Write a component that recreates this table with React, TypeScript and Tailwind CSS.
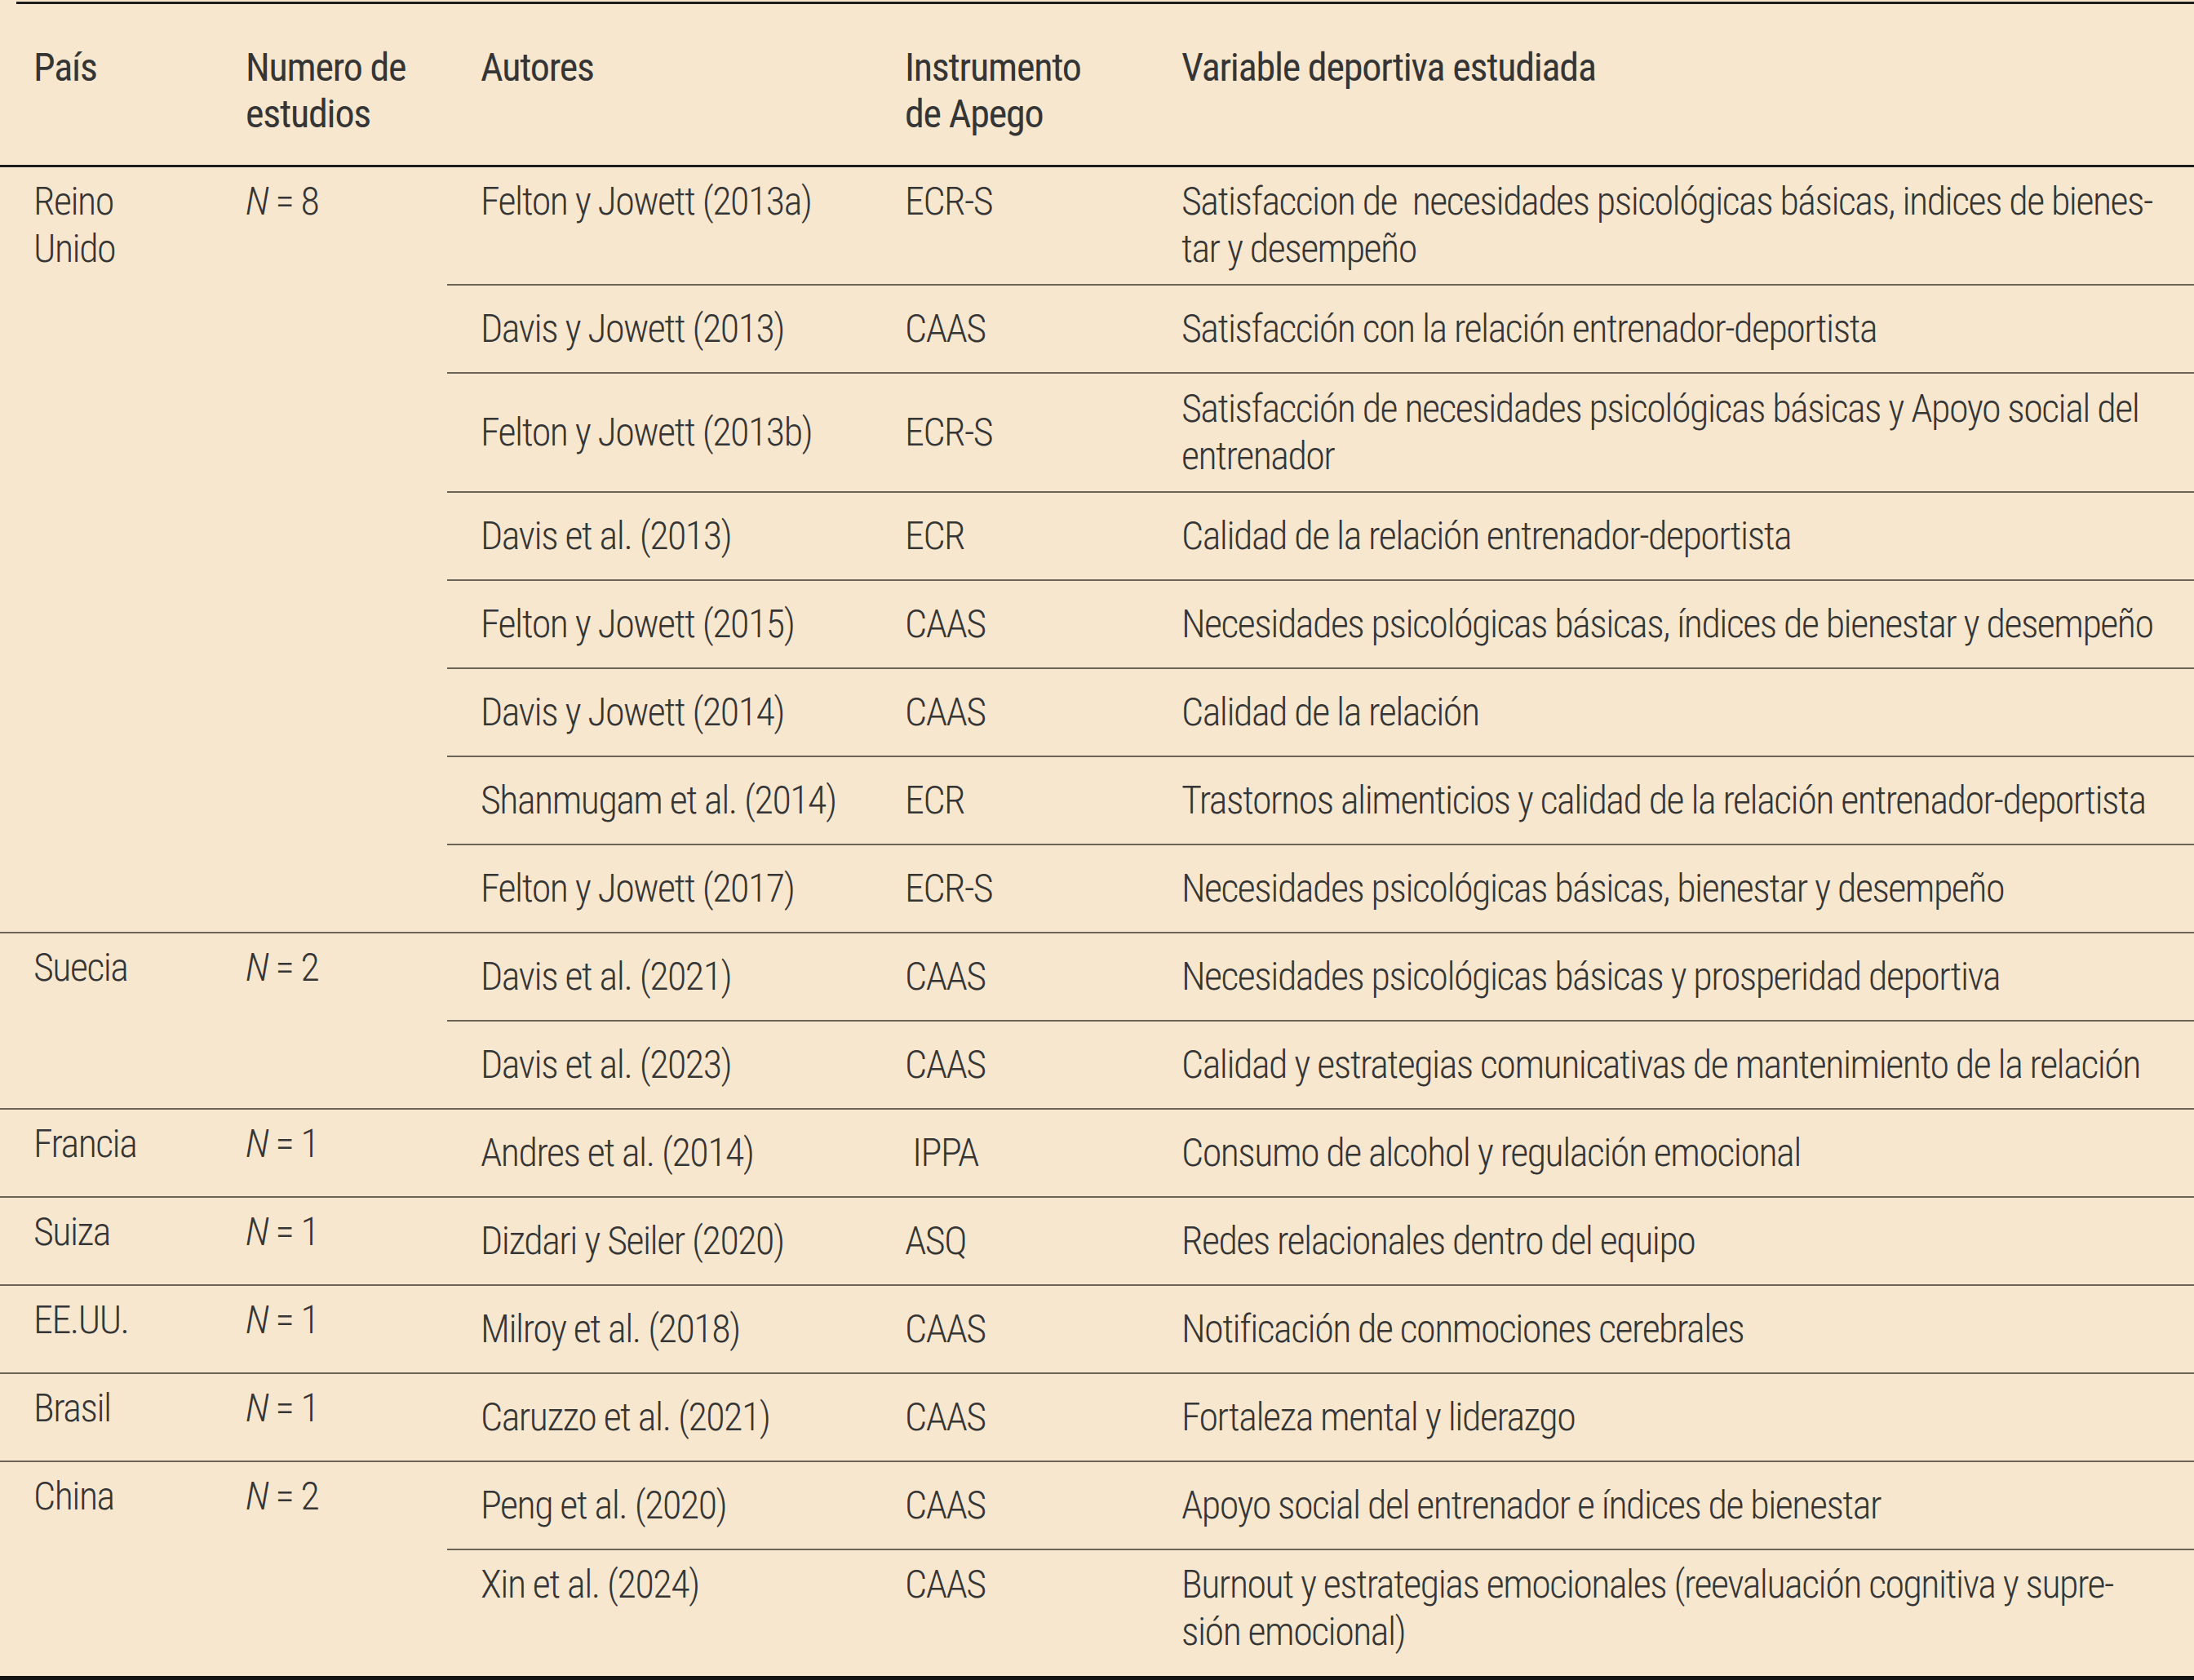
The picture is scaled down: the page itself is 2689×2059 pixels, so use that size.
type Row = {
    author: string;
    instr: string;
    lines: string[];
    h: string;
    top?: boolean;
};

type Group = {
    country: string[];
    n: string;
    rows: Row[];
};

const groups: Group[] = [
    {
        country: ["Reino", "Unido"],
        n: "8",
        rows: [
            { author: "Felton y Jowett (2013a)", instr: "ECR-S", lines: ["Satisfaccion de  necesidades psicológicas básicas, indices de bienes-", "tar y desempeño"], h: "h-[143px]", top: true },
            { author: "Davis y Jowett (2013)", instr: "CAAS", lines: ["Satisfacción con la relación entrenador-deportista"], h: "h-[108px]" },
            { author: "Felton y Jowett (2013b)", instr: "ECR-S", lines: ["Satisfacción de necesidades psicológicas básicas y Apoyo social del", "entrenador"], h: "h-[146px]" },
            { author: "Davis et al. (2013)", instr: "ECR", lines: ["Calidad de la relación entrenador-deportista"], h: "h-[108px]" },
            { author: "Felton y Jowett (2015)", instr: "CAAS", lines: ["Necesidades psicológicas básicas, índices de bienestar y desempeño"], h: "h-[108px]" },
            { author: "Davis y Jowett (2014)", instr: "CAAS", lines: ["Calidad de la relación"], h: "h-[108px]" },
            { author: "Shanmugam et al. (2014)", instr: "ECR", lines: ["Trastornos alimenticios y calidad de la relación entrenador-deportista"], h: "h-[108px]" },
            { author: "Felton y Jowett (2017)", instr: "ECR-S", lines: ["Necesidades psicológicas básicas, bienestar y desempeño"], h: "h-[108px]" },
        ],
    },
    {
        country: ["Suecia"],
        n: "2",
        rows: [
            { author: "Davis et al. (2021)", instr: "CAAS", lines: ["Necesidades psicológicas básicas y prosperidad deportiva"], h: "h-[108px]" },
            { author: "Davis et al. (2023)", instr: "CAAS", lines: ["Calidad y estrategias comunicativas de mantenimiento de la relación"], h: "h-[108px]" },
        ],
    },
    {
        country: ["Francia"],
        n: "1",
        rows: [{ author: "Andres et al. (2014)", instr: " IPPA", lines: ["Consumo de alcohol y regulación emocional"], h: "h-[108px]" }],
    },
    {
        country: ["Suiza"],
        n: "1",
        rows: [{ author: "Dizdari y Seiler (2020)", instr: "ASQ", lines: ["Redes relacionales dentro del equipo"], h: "h-[108px]" }],
    },
    {
        country: ["EE.UU."],
        n: "1",
        rows: [{ author: "Milroy et al. (2018)", instr: "CAAS", lines: ["Notificación de conmociones cerebrales"], h: "h-[108px]" }],
    },
    {
        country: ["Brasil"],
        n: "1",
        rows: [{ author: "Caruzzo et al. (2021)", instr: "CAAS", lines: ["Fortaleza mental y liderazgo"], h: "h-[108px]" }],
    },
    {
        country: ["China"],
        n: "2",
        rows: [
            { author: "Peng et al. (2020)", instr: "CAAS", lines: ["Apoyo social del entrenador e índices de bienestar"], h: "h-[108px]" },
            { author: "Xin et al. (2024)", instr: "CAAS", lines: ["Burnout y estrategias emocionales (reevaluación cognitiva y supre-", "sión emocional)"], h: "h-[156px]", top: true },
        ],
    },
];

const spans: Record<number, string> = {
    1: "row-span-1",
    2: "row-span-2",
    8: "row-span-8",
};

// body text: light, slightly tightened to get near the condensed face
const cell = "pl-[41px] text-[48px] leading-[58px] font-light tracking-[-1.5px]";

export default function App() {
    return (
        <div
            className="min-h-screen bg-[#f7e7ce] pt-[2px] text-[#353535] [font-family:'Roboto_Condensed',Roboto,sans-serif]"
        >
            {/* top rule */}
            <div className="ml-[20px] h-[3px] bg-[#1c1c1c]" />

            <div className="grid grid-cols-[260px_288px_520px_339px_1fr] border-b-[5px] border-[#141414]">

                {/* header */}
                {["País", "Numero de|estudios", "Autores", "Instrumento|de Apego", "Variable deportiva estudiada"].map((h, i) => (
                    <div
                        key={i}
                        className="h-[200px] border-b-[3px] border-[#1c1c1c] pl-[41px] pt-[49px] text-[48px] leading-[57px] font-normal tracking-[-1.2px]"
                    >
                        {h.split("|").map((l, j) => (
                            <div key={j} className="whitespace-nowrap">{l}</div>
                        ))}
                    </div>
                ))}

                {/* body */}
                {groups.map((g, gi) => (
                    g.rows.map((r, ri) => {
                        const border = gi === 0 && ri === 0 ? "" : "border-t-2 border-[#6b6456]";
                        const align = r.top ? "items-start pt-[13px]" : "items-center";
                        return [
                            ri === 0 && (
                                <div
                                    key={`c${gi}`}
                                    className={`${spans[g.rows.length]} ${border} ${cell} pt-[13px]`}
                                >
                                    {g.country.map((c, j) => (
                                        <div key={j}>{c}</div>
                                    ))}
                                </div>
                            ),
                            ri === 0 && (
                                <div
                                    key={`n${gi}`}
                                    className={`${spans[g.rows.length]} ${border} ${cell} pt-[13px] whitespace-nowrap`}
                                >
                                    <span className="italic">N</span> = {g.n}
                                </div>
                            ),
                            <div key={`a${gi}-${ri}`} className={`${r.h} ${border} flex ${align} ${cell} whitespace-nowrap`}>
                                {r.author}
                            </div>,
                            <div key={`i${gi}-${ri}`} className={`${r.h} ${border} flex ${align} ${cell} whitespace-pre`}>
                                {r.instr}
                            </div>,
                            <div key={`v${gi}-${ri}`} className={`${r.h} ${border} flex ${align} ${cell}`}>
                                <div>
                                    {r.lines.map((l, j) => (
                                        <div key={j} className="whitespace-pre">{l}</div>
                                    ))}
                                </div>
                            </div>,
                        ];
                    })
                ))}

            </div>
        </div>
    );
}
